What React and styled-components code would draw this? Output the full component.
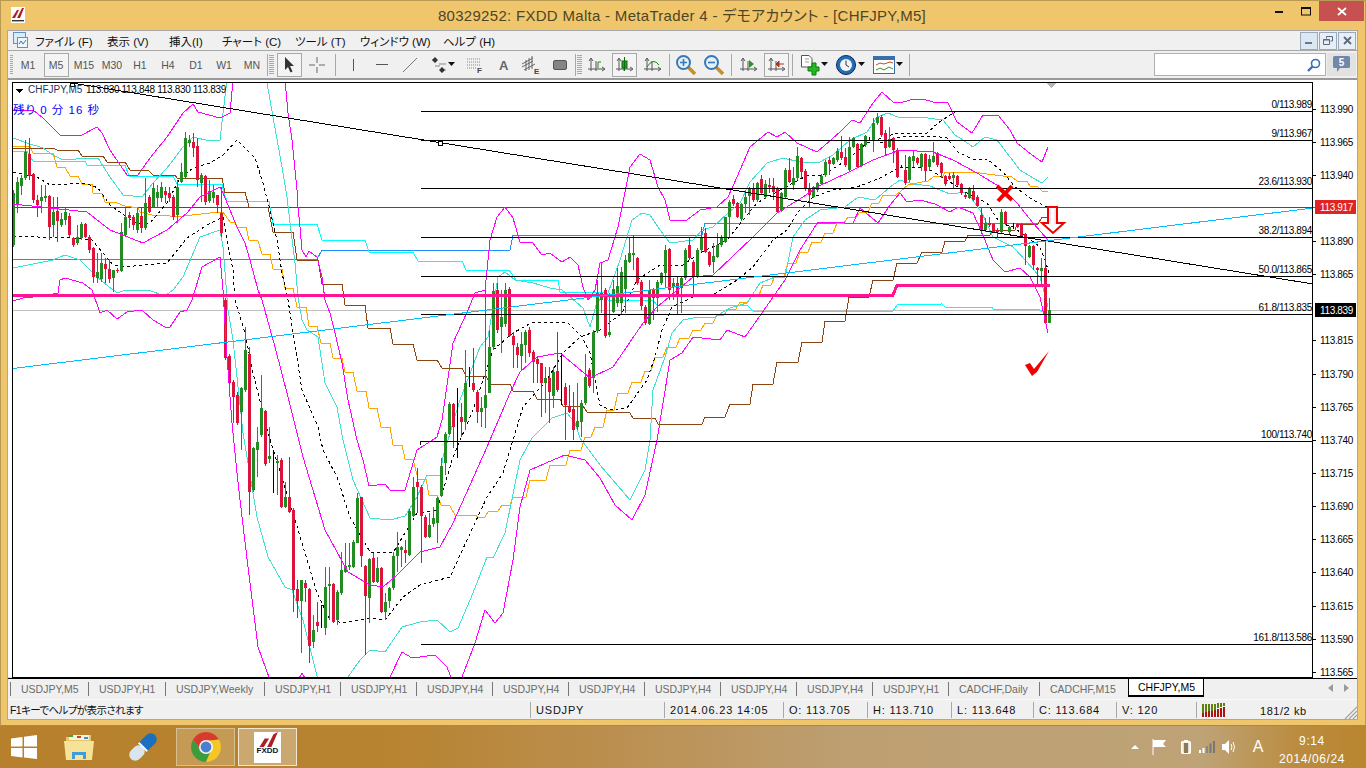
import React from 'react';
import styled, { createGlobalStyle } from 'styled-components';

const FONT = '"Liberation Sans", "Noto Sans CJK JP", sans-serif';

const Global = createGlobalStyle`
  html, body { margin: 0; padding: 0; width: 1366px; height: 768px; overflow: hidden; background: #b8822f; }
  body { font-family: ${FONT}; font-feature-settings: "palt"; }
`;

const Page = styled.div`width:1366px;height:768px;display:flex;flex-direction:column;overflow:hidden;`;
const Win = styled.div`
  height:726px;box-sizing:border-box;background:#efc66b;border:1px solid #b99a55;border-bottom:1px solid #a98a45;
  padding:0 7px 5px 6px;display:flex;flex-direction:column;
`;
const TitleBar = styled.div`height:29px;display:flex;align-items:flex-start;position:relative;flex:none;`;
const AppIcon = styled.div`margin:6px 0 0 4px;width:14px;height:16px;flex:none;`;
const Title = styled.div`
  flex:1;text-align:center;font-size:15px;line-height:30px;color:#4f4526;letter-spacing:.3px;padding-left:74px;white-space:nowrap;
`;
const Caption = styled.div`display:flex;align-items:flex-start;flex:none;margin-right:-6px;`;
const CapBtn = styled.div`width:${p=>p.$w}px;height:20px;display:flex;align-items:center;justify-content:center;background:${p=>p.$bg||'transparent'};`;
const Client = styled.div`flex:1;border:1px solid #a8a8a8;background:#f0f0f0;display:flex;flex-direction:column;min-height:0;`;

const MenuBar = styled.div`height:19px;flex:none;display:flex;align-items:center;border-bottom:1px solid #a8a8a8;font-size:11.5px;color:#111;position:relative;`;
const MenuIcon = styled.div`width:22px;padding-left:5px;height:17px;flex:none;`;
const MenuItem = styled.div`width:${p=>p.$w}px;flex:none;white-space:nowrap;`;
const Mdi = styled.div`margin-left:auto;display:flex;gap:1px;padding-right:1px;`;
const MdiBtn = styled.div`
  width:16px;height:16px;border:1px solid #9aaabb;background:${p=>p.$on?'#dbe7f3':'#e8eef5'};display:flex;align-items:center;justify-content:center;
`;

const ToolBar = styled.div`height:27px;flex:none;display:flex;align-items:center;border-bottom:2px solid #9a9a9a;box-sizing:content-box;padding-left:2px;font-size:10.5px;color:#555;`;
const Grip = styled.div`width:${p=>p.$w||5}px;height:20px;flex:none;margin-right:${p=>p.$mr??3}px;background:repeating-linear-gradient(180deg,#a8a8a8 0 1px,transparent 1px 2px);`;
const Sep = styled.div`width:1px;height:22px;flex:none;background:#a8a8a8;margin:0 ${p=>p.$m??4}px;`;
const Tool = styled.div`
  width:${p=>p.$w||28}px;height:24px;flex:none;box-sizing:border-box;display:flex;align-items:center;justify-content:center;
  ${p=>p.$on?`border:1px solid #a8a8a8;margin:0 1.5px;width:25px;background:repeating-conic-gradient(#fafafa 0 25%,#eee 0 50%) 0 0/2px 2px;`:''}
`;
const Search = styled.div`
  margin-left:auto;width:172px;height:23px;box-sizing:border-box;background:#fff;border:1px solid #b0b0b0;display:flex;align-items:center;justify-content:flex-end;padding-right:4px;flex:none;
`;
const MsgBtn = styled.div`width:29px;height:23px;margin:0 1px 0 1px;background:#e2e2e2;flex:none;display:flex;align-items:center;justify-content:center;`;

const ChartWrap = styled.div`height:598px;flex:none;background:#fff;`;
const ChartSvg = styled.svg`display:block;width:1349px;height:598px;`;

const TabBar = styled.div`height:20px;flex:none;display:flex;align-items:flex-start;border-top:1px solid #000;padding-left:2px;font-size:10.5px;position:relative;`;
const Tab = styled.div`
  width:${p=>p.$w}px;height:${p=>p.$on?'18px':'14px'};box-sizing:border-box;flex:none;white-space:nowrap;
  ${p=>p.$on?`background:#fff;border:1px solid #000;border-top:none;border-bottom:2px solid #000;color:#000;padding:2px 0 0 9px;`
            :`border-left:1px solid #777;color:#6b6b6b;margin-top:3px;padding:0 0 0 10px;line-height:14px;`}
`;
const TabArrows = styled.div`margin-left:auto;padding:5px 8px 0 0;display:flex;gap:11px;`;

const StatusBar = styled.div`flex:1;display:flex;align-items:center;padding-top:1px;border-top:1px solid #fafafa;font-size:11px;color:#111;position:relative;`;
const Cell = styled.div`
  width:${p=>p.$w}px;flex:none;height:16px;line-height:16px;box-sizing:border-box;white-space:nowrap;letter-spacing:.8px;
  ${p=>p.$first?'padding-left:2px;letter-spacing:-.6px;font-size:10.5px;':'border-left:1px solid #a8a8a8;padding-left:5px;'}
`;
const Meter = styled.svg`display:block;margin-top:1px;`;
const Resize = styled.svg`position:absolute;right:0;bottom:0;`;

const TaskBar = styled.div`
  flex:1;display:flex;align-items:center;padding-left:10px;
  background:linear-gradient(90deg,#b6802c 0,#b88330 28%,#bb8f50 45%,#bd9f72 62%,#bea376 88%,#bb8c3f 95%,#b9852f 100%);
`;
const TaskIcon = styled.div`width:${p=>p.$w}px;flex:none;height:38px;display:flex;align-items:center;justify-content:center;`;
const TaskBtn = styled.div`
  width:59px;height:38px;box-sizing:border-box;flex:none;margin-right:3px;display:flex;align-items:center;justify-content:center;
  border:1px solid ${p=>p.$bright?'#f2e6cf':'#d8bf8f'};background:${p=>p.$bright?'#cba870':'#c59a55'};
`;
const FxTile = styled.div`width:27px;height:31px;background:#fff;display:flex;flex-direction:column;align-items:center;overflow:hidden;`;
const FxText = styled.span`font-size:8px;font-weight:bold;line-height:8px;color:#111;`;
const Tray = styled.div`margin-left:auto;display:flex;align-items:center;height:100%;padding-right:11px;`;
const TrayIcon = styled.div`width:${p=>p.$w}px;flex:none;display:flex;align-items:center;justify-content:center;color:#fff;`;
const TrayA = styled.span`font-size:16px;color:#fff;`;
const Clock = styled.div`width:86px;flex:none;text-align:center;color:#fff;font-size:12px;line-height:18px;letter-spacing:.6px;margin-top:5px;`;

/* ---------------------- chart data ---------------------- */
const CFrame = { l: 13, r: 1313, t: 83, b: 678 };

// candles are read from zoomed crops: [top, bottom, colour, high?, low?], y = y0 + v/3
const C8 = [[340,495,'g',330,500],[305,375,'g',290,400],[295,318,'g',285,345],[215,295,'g',180,300],[222,288,'r',175,300],[283,360,'r',280,370],[360,375,'r',345,410],[350,362,'g',315,400],[348,355,'g',315,365],[348,440,'r',345,480],[395,435,'g',350,470],[392,422,'r',350,485],[418,435,'g',400,440],[395,420,'g',385,435],[408,465,'r',400,470],[475,495,'r',470,500],[470,490,'g',435,495],[432,475,'g',425,480],[432,470,'r',430,475],[470,510,'r',465,520],[505,590,'r',500,610],[575,595,'g',520,610],[550,598,'g',520,605],[552,568,'r',535,610],[568,598,'r',540,610],[570,595,'g',570,635],[570,574,'r',565,580],[455,572,'g',430,575],[412,465,'g',385,470],[405,415,'r',395,445],[410,435,'r',405,450],[400,450,'g',385,460],[408,445,'r',385,460],[370,445,'g',295,450],[350,395,'r',345,400],[323,382,'g',310,385],[335,355,'g',315,380],[322,355,'g',305,365],[333,345,'r',320,370],[340,355,'r',320,365],[352,412,'r',345,420],[322,405,'g',300,430],[275,305,'g',250,310],[175,290,'g',155,295],[180,190,'g',165,200],[185,205,'r',160,230],[198,300,'r',175,320],[285,310,'g',280,365],[288,365,'r',285,375],[333,362,'g',300,370],[335,355,'g',315,370],[345,375,'r',345,400],[400,460,'r',320,470]];
const C9 = [[0,175,'r'],[168,248,'r'],[245,290,'r',240,370],[285,370,'r',275,375],[265,335,'g',260,450],[150,270,'g',80,275],[162,575,'r',140,645],[445,570,'g',440,575],[425,450,'g',380,530],[325,405,'g',225,410],[333,493,'r',330,497],[468,477,'g',380,490],[450,580,'k',450,580],[483,490,'g',465,585],[480,620,'r',475,625],[590,620,'g',545,625],[590,635,'r',470,640],[630,870,'r',625,935],[867,903,'r',840,955],[840,903,'g',840,1060],[850,865,'r',840,905],[867,1037,'r',865,1088],[990,1025,'g',945,1045],[965,978,'r',905,995],[915,985,'k',915,985],[862,985,'g',800,1005],[852,858,'g',800,960],[853,965,'r',850,970],[877,960,'g',870,975],[810,880,'g',755,885],[798,815,'g',730,820],[795,802,'g',730,810],[725,800,'g',720,805],[595,728,'g',580,730],[592,768,'r',590,800],[798,888,'r',795,1065],[778,893,'g',775,970],[775,845,'r',760,850],[805,845,'g',770,850],[805,935,'r',800,940],[905,935,'g',880,960],[865,902,'g',860,925],[767,865,'g',755,870],[742,768,'g',695,815],[742,750,'g',738,800],[750,758,'r',720,790],[633,765,'g',628,768],[560,648,'g',530,650],[545,560,'r',505,640],[560,648,'r',555,790],[650,710,'r',645,715],[675,710,'g',640,715],[655,672,'g',620,680],[595,668,'g',590,730],[498,588,'g',475,590],[402,488,'g',395,525],[312,402,'g',305,405],[312,380,'r',310,445],[265,475,'k',265,475],[350,365,'r',310,410],[250,365,'g',150,390],[200,260,'k',200,260],[250,270,'r',145,275],[275,335,'r',270,370]];
const C10 = [[985,995,'g',950,1040],[945,985,'g',610,1045],[800,938,'g',750,940],[632,802,'g',610,810],[630,750,'r',610,760],[712,740,'g',630,820],[630,732,'g',610,740],[628,768,'r',620,770],[768,795,'r',755,865],[800,825,'r',790,865],[793,828,'g',755,870],[757,795,'g',750,850],[750,820,'r',740,830],[815,845,'r',810,910],[838,852,'r',828,910],[850,908,'r',848,1010],[895,910,'g',860,1000],[895,935,'r',860,1030],[875,948,'g',860,985],[872,930,'r',755,935],[820,975,'k',820,975],[922,975,'r',910,1080],[978,997,'r',915,1000],[988,1050,'r',935,1080],[1022,1040,'g',910,1050],[970,1025,'g',960,1070],[890,968,'g',822,975],[870,918,'r',865,925],[757,895,'g',750,940],[640,752,'g',600,760],[640,660,'g',550,700],[630,768,'r',625,775],[755,765,'g',640,770],[628,695,'g',600,700],[618,668,'g',565,680],[575,668,'g',560,705],[540,628,'g',525,700],[520,545,'g',470,550],[518,525,'g',465,570],[533,610,'r',530,615],[607,678,'r',600,690],[680,730,'r',675,735],[630,733,'g',600,735],[630,655,'r',625,720],[605,655,'g',600,695],[580,608,'g',575,615],[510,578,'g',495,620],[508,630,'r',505,660],[608,620,'g',595,660],[610,650,'r',590,705],[595,625,'g',590,700],[510,593,'g',505,600],[495,535,'r',470,540],[545,590,'r',540,650],[510,590,'g',505,595],[470,510,'g',440,515],[458,515,'r',445,520],[517,555,'r',512,560],[527,545,'g',490,580],[495,530,'g',460,535],[470,495,'g',465,500],[412,485,'g',410,490],[365,410,'g',360,470],[358,372,'r',345,378],[370,412,'r',365,415],[372,418,'g',368,422],[352,372,'g',330,400],[328,348,'g',320,405],[325,360,'r',310,365],[310,360,'g',305,365],[298,340,'r',285,345],[312,352,'g',300,358],[315,320,'r',295,340],[318,335,'r',295,360],[328,395,'r',320,398],[338,392,'g',335,395],[270,352,'g',265,355],[270,305,'r',235,310],[295,315,'g',260,330],[228,295,'g',200,300],[235,275,'r',230,295],[272,328,'r',268,332],[325,345,'r',310,380],[322,352,'g',318,355],[310,330,'g',305,335],[288,312,'g',282,316],[245,285,'g',240,290],[240,252,'r',232,285],[235,252,'g',230,255],[212,240,'g',205,245],[215,235,'r',168,240],[232,255,'r',205,260],[200,270,'g',172,275],[175,200,'g',170,205],[192,262,'r',188,265],[192,258,'g',188,262],[168,195,'g',165,200],[170,182,'k',170,182],[130,180,'g',115,215],[110,130,'g',100,135],[110,165,'r',105,170],[160,205,'r',150,225],[178,200,'g',140,205],[175,210,'r',172,250],[210,290,'r',205,295]];
const C7 = [[255,265,'k',255,265],[270,310,'r',225,315],[232,300,'g',228,305],[228,242,'g',212,262],[235,250,'r',230,255],[222,262,'g',218,272],[222,272,'r',218,302],[238,262,'g',225,272],[228,245,'g',185,250],[218,255,'r',215,262],[250,278,'r',246,295],[288,312,'r',284,318],[288,296,'r',278,300],[285,295,'g',275,325],[288,315,'r',285,318],[313,340,'r',310,345],[345,352,'r',340,356],[328,353,'g',322,358],[333,360,'r',315,362],[350,377,'r',346,380],[405,452,'r',385,462],[430,450,'g',415,455],[430,436,'r',410,440],[432,455,'r',428,458],[450,456,'r',445,470],[397,455,'g',388,458],[397,433,'r',393,436],[442,457,'g',438,462],[430,448,'k',430,448],[432,440,'r',430,444],[432,467,'r',430,470],[462,497,'r',458,555],[497,530,'g',494,534],[497,555,'r',494,570],[565,570,'r',562,612],[565,572,'g',535,612],[565,730,'r',485,732],[690,728,'g',655,730]];

const buildCandles = () => {
  const out = [];
  let x = 13;
  const add = (list, y0) => list.forEach(([t,b,c,h,l]) => {
    out.push({ x, t: y0+t/3, b: y0+b/3, h: y0+(h??t-6)/3, l: y0+(l??b+6)/3, c });
    x += 4;
  });
  add(C8, 80);
  add(C9, 300);
  add(C10, 80);
  add(C7, 80);
  return out;
};
const CANDLES = buildCandles();
const CCOL = { g: '#228b22', r: '#dc143c', k: '#000' };

const stair = pts => {
  const o = [];
  pts.forEach((p,i) => {
    if (i) o.push([p[0]-4, pts[i-1][1]]);
    o.push(p);
  });
  return o;
};

const magUp = [[13,110],[27,110],[33,110],[43,118],[60,135],[82,135],[97,127],[102,133],[110,150],[127,175],[138,175],[150,158],[167,137],[183,113],[193,104],[198,112],[220,118],[230,113],[233,80],[285,80],[288,113],[292,140],[297,190],[298,207],[300,227],[302,250],[306,257],[309,251],[317,257],[322,277],[325,300],[330,313],[335,333],[342,363],[348,400],[357,440],[363,460],[369,486],[385,484],[390,490],[405,490],[417,450],[437,437],[442,420],[453,343],[468,310],[475,293],[485,290],[490,240],[497,217],[505,207],[513,218],[520,242],[533,243],[542,255],[550,253],[562,262],[570,257],[578,265],[583,287],[588,300],[595,290],[600,263],[608,260],[618,227],[630,167],[640,154],[650,160],[658,187],[665,200],[670,220],[687,220],[700,210],[717,207],[728,197],[737,177],[750,147],[768,132],[777,137],[785,132],[797,143],[817,152],[840,132],[852,120],[860,123],[873,103],[882,92],[893,102],[900,103],[910,100],[923,99],[933,102],[948,103],[957,122],[972,133],[983,115],[998,115],[1010,130],[1017,143],[1032,155],[1042,162],[1048,147]];
const magMid = [[13,204],[87,212],[110,230],[143,243],[167,230],[187,213],[200,197],[220,187],[223,193],[237,227],[245,243],[250,260],[258,290],[262,300],[275,347],[288,397],[303,457],[325,530],[348,572],[370,585],[383,587],[397,575],[420,552],[440,547],[453,523],[487,447],[510,393],[520,372],[537,357],[560,353],[590,378],[613,367],[643,323],[657,307],[693,277],[713,275],[753,237],[777,213],[803,197],[817,187],[847,173],[873,160],[900,150],[933,152],[953,160],[977,173],[1000,187],[1017,203],[1033,223],[1048,240]];
const magLow = [[13,301],[23,298],[43,296],[58,293],[60,280],[65,278],[83,283],[92,290],[100,313],[107,310],[117,319],[127,312],[142,310],[153,320],[165,327],[170,327],[180,312],[187,310],[192,300],[202,267],[220,257],[223,290],[227,357],[232,423],[237,473],[240,500],[248,567],[258,647],[270,680],[298,680],[302,673],[306,680],[388,680],[390,677],[402,652],[412,658],[435,655],[447,667],[452,680],[460,680],[462,677],[475,643],[485,610],[495,623],[503,613],[513,560],[520,507],[530,470],[553,460],[565,455],[585,460],[600,478],[615,505],[632,520],[645,495],[657,440],[670,360],[682,353],[693,337],[720,340],[727,330],[745,337],[762,313],[773,297],[785,280],[800,250],[818,222],[845,223],[853,223],[860,208],[878,223],[890,205],[900,193],[907,202],[920,200],[935,204],[950,212],[958,207],[973,213],[982,233],[993,260],[1005,272],[1020,268],[1030,277],[1040,297],[1048,333]];
const turqUp = [[13,138],[27,143],[43,148],[53,155],[63,160],[90,158],[98,158],[110,177],[123,195],[142,197],[153,183],[167,168],[183,147],[193,137],[210,141],[220,140],[223,113],[227,80],[264,80],[267,83],[273,117],[282,167],[287,197],[290,223],[295,263],[298,297],[302,320],[307,330],[318,337],[325,383],[337,407],[343,440],[353,480],[370,518],[390,520],[405,516],[417,497],[427,475],[440,475],[443,457],[453,423],[460,400],[480,347],[488,337],[498,277],[505,272],[515,280],[533,283],[550,288],[562,290],[583,308],[590,327],[597,302],[608,293],[620,260],[632,220],[642,213],[650,215],[660,230],[670,243],[693,240],[702,230],[713,227],[728,213],[740,203],[750,182],[767,163],[783,158],[800,162],[818,163],[833,155],[850,140],[867,132],[877,117],[888,113],[900,118],[920,117],[943,120],[955,135],[963,140],[973,147],[985,137],[997,140],[1010,157],[1020,170],[1033,178],[1042,183],[1048,177]];
const turqLow = [[13,268],[53,260],[65,255],[80,260],[97,277],[113,290],[118,293],[125,290],[148,290],[165,296],[173,290],[183,277],[200,237],[220,230],[223,247],[228,310],[233,340],[243,433],[257,517],[268,557],[285,587],[292,590],[303,620],[318,680],[346,680],[348,677],[360,660],[370,650],[385,652],[402,627],[420,622],[437,620],[450,632],[458,628],[473,593],[487,557],[493,558],[505,533],[520,460],[532,438],[552,418],[567,413],[575,423],[580,438],[600,465],[630,500],[645,470],[650,440],[653,390],[665,357],[672,333],[683,320],[698,317],[713,318],[730,308],[747,303],[760,283],[775,277],[785,277],[793,237],[805,220],[820,210],[845,207],[858,197],[875,200],[890,187],[900,180],[913,184],[930,186],[950,194],[967,192],[982,213],[993,237],[1013,247],[1027,262],[1040,277],[1048,307]];
const dash1 = [[13,172],[37,177],[50,185],[85,183],[98,188],[110,205],[127,217],[137,223],[150,223],[167,203],[180,178],[193,168],[210,163],[223,155],[237,140],[247,150],[255,158],[263,183],[270,210],[277,240],[282,273],[288,300],[302,390],[318,427],[323,450],[337,477],[350,517],[370,552],[393,553],[417,513],[437,510],[441,497],[453,457],[473,410],[493,350],[513,333],[533,322],[567,322],[582,337],[590,353],[600,405],[610,410],[627,408],[647,380],[655,357],[662,330],[672,307],[693,297],[713,295],[737,280],[753,267],[773,240],[787,230],[797,213],[813,197],[833,190],[857,187],[880,178],[900,167],[927,168],[947,180],[967,193],[987,203],[1000,223],[1013,227],[1027,237],[1040,247],[1045,260],[1049,273]];
const dash2 = [[13,236],[38,237],[60,237],[92,240],[113,265],[123,267],[167,263],[187,238],[207,225],[223,217],[227,240],[233,270],[235,300],[245,333],[253,373],[268,433],[293,513],[317,593],[330,620],[343,623],[370,618],[385,620],[403,597],[420,585],[450,577],[467,540],[487,497],[503,473],[513,440],[523,407],[547,380],[563,353],[580,337],[600,330],[622,313],[637,280],[660,265],[683,265],[700,253],[727,240],[743,220],[757,203],[780,190],[808,175],[823,175],[847,160],[867,143],[897,133],[927,133],[938,123],[953,113],[959,110]];
const dash3 = [[880,143],[900,137],[933,136],[947,138],[958,152],[972,159],[987,159],[1003,172],[1015,187],[1033,200],[1047,207]];
const orange = [[13,146],[30,146],[33,153],[53,153],[57,167],[65,167],[70,176],[78,176],[82,184],[92,184],[93,193],[102,194],[105,202],[117,203],[125,206],[138,208],[140,212],[152,215],[165,215],[175,217],[210,213],[223,212],[230,222],[235,222],[237,227],[246,227],[249,240],[258,241],[262,254],[270,254],[273,269],[282,269],[285,288],[293,288],[297,307],[306,307],[309,326],[317,326],[321,343],[330,343],[333,358],[342,358],[345,372],[353,372],[357,391],[366,391],[369,408],[377,408],[381,427],[390,427],[393,445],[402,445],[405,459],[413,459],[418,479],[426,479],[429,495],[437,495],[441,505],[450,506],[455,515],[475,515],[478,517],[485,517],[488,512],[498,511],[502,505],[510,505],[513,497],
  ...stair([[513,497],[530,480],[550,465],[570,450],[585,437],[595,427],[607,410],[618,393],[632,382],[645,371],[655,357],[667,347],[680,338],[693,330],[705,323],[717,315],[728,309],[740,302],[752,295],[763,285],[775,276],[788,263],[800,252],[812,242],[825,233],[837,223],[848,217],[860,212],[872,203],[883,195],[900,192]]).slice(1),
  [908,185],[922,182],[928,181],[933,177],[943,176],[945,172],[972,172],[987,174],[1003,176],[1012,177],[1017,181],[1027,181],[1030,186],[1037,186],[1042,191],[1048,192]];
const cyan = [[13,151],[27,151],[33,161],[85,161],[87,165],[125,165],[129,176],[173,176],[177,184],[222,184],[224,193],[227,201],[269,201],[273,224],[317,224],[322,240],[365,240],[369,252],[413,252],[418,261],[462,261],[466,270],[509,270],[516,280],[558,280],[560,292],[605,292],[608,300],[653,300],[657,305],[747,305],[753,311],[893,311],[897,305],[942,304],[945,307],[992,307],[993,309],[1038,309],[1045,313]];
const brown = [[13,148],[53,148],[57,150],[78,150],[82,156],[103,156],[107,162],[125,162],[130,170],[148,170],[153,175],[175,175],[177,178],[222,178],[225,193],[245,192],[249,207],[268,207],[273,232],[293,232],[297,260],[318,260],[322,284],[342,284],[345,305],[365,305],[368,328],[390,328],[393,344],[413,344],[417,360],[437,360],[442,368],[462,368],[466,376],[486,376],[490,384],[510,384],[513,391],[533,391],[537,399],[560,399],[563,406],[583,406],[587,412],[630,413],[633,418],[655,418],[658,424],[702,424],[705,417],[725,417],[730,404],[750,404],[753,384],[773,384],[777,362],[798,362],[802,342],[822,342],[825,321],[845,321],[849,297],[869,297],[873,280],[893,280],[897,263],[917,263],[922,252],[942,252],[945,241],[965,241],[968,235],[990,235],[993,230],[1015,230],[1017,224],[1038,224],[1042,217],[1048,217]];
const blue = [[13,259],[317,259],[322,250],[510,250],[513,235],[702,235],[705,223],[1038,223]];
const pink = [[13,295],[893,295],[897,285],[1050,285]];

const pts = a => a.map(p => p.join(',')).join(' ');

const FIBS = [
  [111,'0/113.989'],[140,'9/113.967'],[188,'23.6/113.930'],[237,'38.2/113.894'],[276,'50.0/113.865'],[314,'61.8/113.835'],[441,'100/113.740'],[644,'161.8/113.586'],
];
const AXIS = [['113.990',110],['113.965',143],['113.940',176],['113.890',242],['113.865',275],['113.815',341],['113.790',375],['113.765',408],['113.740',441],['113.715',474],['113.690',507],['113.665',540],['113.640',573],['113.615',607],['113.590',640],['113.565',673]];

const ChartText = styled.text`font-family:${FONT};font-size:${p=>p.$s||10}px;letter-spacing:${p=>p.$ls??-.35}px;fill:${p=>p.$c||'#000'};`;

const Chart = () => (
  <ChartSvg viewBox="8 80 1349 598" shapeRendering="crispEdges">
    <defs>
      <clipPath id="plot"><rect x={CFrame.l} y={CFrame.t} width={CFrame.r-CFrame.l} height={CFrame.b-CFrame.t} /></clipPath>
    </defs>
    <g clipPath="url(#plot)" fill="none">
      <line x1="13" x2="1313" y1="310.5" y2="310.5" stroke="#c0c0c0" />
      <line x1="13" x2="1313" y1="207.5" y2="207.5" stroke="#ff0000" />
      <polyline points={pts(blue)} stroke="#1e90ff" />
      <polyline points={pts(cyan)} stroke="#00ffff" />
      <polyline points={pts(orange)} stroke="#ffa500" />
      <polyline points={pts(brown)} stroke="#8b4513" />
      <polyline points={pts(turqUp)} stroke="#40e0d0" />
      <polyline points={pts(turqLow)} stroke="#40e0d0" />
      <polyline points={pts(dash1)} stroke="#000" strokeDasharray="3 3" />
      <polyline points={pts(dash2)} stroke="#000" strokeDasharray="3 3" />
      <polyline points={pts(dash3)} stroke="#000" strokeDasharray="3 3" />
      {CANDLES.map(k => (
        <g key={k.x}>
          <line x1={k.x+.5} x2={k.x+.5} y1={k.h} y2={k.l} stroke={CCOL[k.c]} />
          {k.c !== 'k' && <rect x={k.x-1} y={k.t} width="3" height={Math.max(1,k.b-k.t)} fill={CCOL[k.c]} />}
        </g>
      ))}
      <polyline points={pts(magUp)} stroke="#ff00ff" />
      <polyline points={pts(magMid)} stroke="#ff00ff" />
      <polyline points={pts(magLow)} stroke="#ff00ff" />
      <polyline points={pts(pink)} stroke="#ff1493" strokeWidth="3" />
      {FIBS.map(([y]) => <line key={y} x1="421" x2="1313" y1={y+.5} y2={y+.5} stroke="#000" />)}
      <line x1="72" y1="83" x2="1313" y2="284" stroke="#000" />
      <line x1="13" y1="368.5" x2="1313" y2="208" stroke="#00bfff" />
      <polyline points="420,445 420,441 424,441" stroke="#000" />
      <rect x="438.5" y="141.5" width="4" height="4" fill="#fff" stroke="#000" />
      <rect x="70.5" y="83.5" width="4" height="3" fill="#fff" stroke="#000" />
      <polygon points="1047,83 1056,83 1051.5,88" fill="#b4b4b4" />
      <g shapeRendering="auto">
        <path d="M997 186 L1012 200 M1012 186 L998 201" stroke="#f00000" strokeWidth="4" />
        <polygon points="1048,207 1057,207 1057,223 1064,223 1053,233 1042,223 1048,223" fill="#fff" stroke="#f00000" strokeWidth="2" />
        <path d="M1050 209 V224 M1055 209 V224" stroke="#ffc8d8" strokeWidth="1" />
        <polygon points="1025,365 1030,363 1034,369 1049,351 1037,372 1032,376" fill="#f00000" />
      </g>
    </g>
    <polygon points="16,89 23,89 19.5,93" fill="#000" />
    <ChartText x="28" y="93" $s="10" $c="#1c3560" $ls="0">CHFJPY,M5</ChartText>
    <ChartText x="86" y="93" $s="10" $ls="-.32">113.830 113.848 113.830 113.839</ChartText>
    <ChartText x="13" y="114" $s="11.5" $c="#0000ff" $ls="1" xmlSpace="preserve">残り 0 分 16 秒</ChartText>
    {FIBS.map(([y,t]) => (
      <ChartText key={t} x="1312" y={y-3} textAnchor="end">{t}</ChartText>
    ))}
    <rect x="12.5" y="82.5" width="1300" height="595" fill="none" stroke="#000" />
    <line x1="8" x2="12" y1="677.5" y2="677.5" stroke="#d8d8d8" />
    {AXIS.map(([t,y]) => (
      <g key={t}>
        <line x1="1313" x2="1316" y1={y-.5} y2={y-.5} stroke="#000" />
        <ChartText x="1320" y={y+3}>{t}</ChartText>
      </g>
    ))}
    <rect x="1315" y="200" width="41" height="14" fill="#e02424" />
    <line x1="1313" x2="1316" y1="207.5" y2="207.5" stroke="#e02424" />
    <ChartText x="1320" y="210.5" $c="#fff">113.917</ChartText>
    <rect x="1315" y="303" width="41" height="14" fill="#000" />
    <ChartText x="1320" y="313.5" $c="#fff">113.839</ChartText>
  </ChartSvg>
);

/* ---------------------- icons ---------------------- */
const Ic = ({w=22,h=18,children}) => <svg width={w} height={h} viewBox={`0 0 ${w} ${h}`} style={{display:'block'}}>{children}</svg>;
const Axes = () => <path d="M6 3 V15 M3 13 H19 M4 5 L6 2 L8 5 M17 11 L20 13 L17 15 M11 5 V15" stroke="#555" strokeWidth="1" fill="none" />;
const Drop = () => <svg width="8" height="5" viewBox="0 0 8 5" style={{marginLeft:1}}><path d="M0 0H7L3.5 4Z" fill="#111"/></svg>;

const Logo = ({s=14}) => (
  <svg width={s} height={s*0.7} viewBox="0 0 20 14"><path d="M2 14 L7 6 H11 L6 14Z M9 14 L15 2 L19 0 L13 14Z" fill="#b01f26" /></svg>
);

const Tools1 = ['M1','M15','M30','H1','H4','D1','W1','MN'];

const Zoomer = ({minus}) => (
  <Ic w={24} h={22}>
    <path d="M14 13 L21 20" stroke="#c89020" strokeWidth="3.5" />
    <circle cx="9.5" cy="8.5" r="6.5" fill="#e2f0fa" stroke="#3a78b5" strokeWidth="2"/>
    <path d={minus?'M6 8.5H13':'M6 8.5H13M9.5 5V12'} stroke="#3a78b5" strokeWidth="1.6" />
  </Ic>
);

const Chrome = () => (
  <svg width="30" height="30" viewBox="-15 -15 30 30">
    <path d="M0 -6 L12.99 -7.5 A15 15 0 0 0 -12.99 -7.5 L-5.2 3 Z" fill="#d83a2e"/>
    <path d="M-12.99 -7.5 A15 15 0 0 0 0 15 L5.2 3 L-5.2 3 Z" fill="#3e9c3c"/>
    <path d="M12.99 -7.5 A15 15 0 0 1 0 15 L5.2 3 L0 -6 Z" fill="#f4c726"/>
    <circle r="7" fill="#f4f4f4"/><circle r="5.4" fill="#4a7fd0"/>
  </svg>
);

export default function App() {
  return (
    <Page>
      <Global />
      <Win>
        <TitleBar>
          <AppIcon>
            <svg width="14" height="16" viewBox="0 0 14 16"><rect width="14" height="16" fill="#fff"/><path d="M1 11 L6 3 H8 L4 11Z M6 11 L11 1 H13 L9 11Z" fill="#b01f26"/><rect x="1" y="13" width="12" height="1.4" fill="#333"/></svg>
          </AppIcon>
          <Title>80329252: FXDD Malta - MetaTrader 4 - デモアカウント - [CHFJPY,M5]</Title>
          <Caption>
            <CapBtn $w={28}><svg width="8" height="3"><rect width="8" height="2" y="1" fill="#111"/></svg></CapBtn>
            <CapBtn $w={26}><svg width="11" height="9"><rect x=".5" y="1" width="9" height="7" fill="none" stroke="#111"/><rect width="10" height="2" y="0" fill="#111"/></svg></CapBtn>
            <CapBtn $w={45} $bg="#c75050"><svg width="10" height="9"><path d="M1 1L9 8M9 1L1 8" stroke="#fff" strokeWidth="1.8"/></svg></CapBtn>
          </Caption>
        </TitleBar>
        <Client>
          <MenuBar>
            <MenuIcon>
              <svg width="16" height="17" viewBox="0 0 16 17"><rect x=".5" y=".5" width="12" height="11" fill="#dcebf8" stroke="#5c94c8"/><rect x="4.5" y="5.5" width="10" height="10" fill="#eef6fc" stroke="#5c94c8"/><path d="M6 12 L8 9 L10 12 L13 8" stroke="#3a78b5" fill="none"/></svg>
            </MenuIcon>
            <MenuItem $w={72}>ファイル (F)</MenuItem>
            <MenuItem $w={62}>表示 (V)</MenuItem>
            <MenuItem $w={53}>挿入(I)</MenuItem>
            <MenuItem $w={73}>チャート (C)</MenuItem>
            <MenuItem $w={65}>ツール (T)</MenuItem>
            <MenuItem $w={83}>ウィンドウ (W)</MenuItem>
            <MenuItem $w={60}>ヘルプ (H)</MenuItem>
            <Mdi>
              <MdiBtn $on><svg width="8" height="8"><rect y="5" width="7" height="2" fill="#6a7a8a"/></svg></MdiBtn>
              <MdiBtn><svg width="10" height="9"><path d="M3.5 2.5V.5H9.5V5H7.5M.5 3.5H6.5V8.5H.5Z M.5 4H6.5" stroke="#5a6a7a" fill="none"/></svg></MdiBtn>
              <MdiBtn><svg width="9" height="9"><path d="M1 1L8 8M8 1L1 8" stroke="#5a6a7a" strokeWidth="1.8"/></svg></MdiBtn>
            </Mdi>
          </MenuBar>
          <ToolBar>
            <Grip $w={3} $mr={1} />
            <Tool>M1</Tool>
            <Tool $on>M5</Tool>
            {Tools1.slice(1).map(t => <Tool key={t}>{t}</Tool>)}
            <Sep $m={1} />
            <Grip $mr={1} />
            <Tool $on>
              <Ic w={14} h={18}><path d="M3 1 V14 L6 11 L8.5 16.5 L10.5 15.5 L8 10 H12 Z" fill="#333"/></Ic>
            </Tool>
            <Tool><Ic w={18} h={18}><path d="M9 1V7M9 11V17M1 9H7M11 9H17" stroke="#666"/></Ic></Tool>
            <Sep $m={4} />
            <Tool><Ic w={4} h={18}><path d="M1.5 3V15" stroke="#555"/></Ic></Tool>
            <Tool><Ic w={14} h={4}><path d="M1 1.5H13" stroke="#555"/></Ic></Tool>
            <Tool><Ic w={16} h={16}><path d="M1 15L15 1" stroke="#777"/></Ic></Tool>
            <Tool $w={38}>
              <Ic w={16} h={16}><path d="M1 3H6M8 7H15M4 9H9M11 13H15" stroke="#888"/><path d="M4 0L7 3L4 6L1 3ZM11 10L14 13L11 16L8 13Z" fill="#333"/></Ic><Drop/>
            </Tool>
            <Tool><Ic w={18} h={20}><path d="M0 4H14M0 7H14M0 10H14M0 13H9" stroke="#888" strokeDasharray="1 1"/><text x="10" y="18" fontSize="8" fontWeight="bold" fill="#444" fontFamily="Liberation Sans">F</text></Ic></Tool>
            <Tool><Ic w={14} h={20}><text x="2" y="15" fontSize="13" fontWeight="bold" fill="#666" fontFamily="Liberation Sans">A</text></Ic></Tool>
            <Tool><Ic w={22} h={22}><path d="M1 10L12 4M1 13L12 7M3 16L14 10M5 6L5 17M8 4L8 16M11 2V15" stroke="#666"/><text x="13" y="20" fontSize="8" fontWeight="bold" fill="#444" fontFamily="Liberation Sans">E</text></Ic></Tool>
            <Tool><Ic w={14} h={10}><rect x=".5" y=".5" width="13" height="9" rx="1.5" fill="#858585" stroke="#555"/></Ic></Tool>
            <Sep $m={1} />
            <Grip $mr={0} />
            <Tool><Ic><Axes/><path d="M13 12V6H16" stroke="#1d8a1d" fill="none"/></Ic></Tool>
            <Tool $on><Ic><Axes/><rect x="9" y="5" width="5" height="7" fill="#22a022" stroke="#0d6a0d"/><path d="M11.5 1V15" stroke="#0d6a0d"/></Ic></Tool>
            <Tool><Ic><Axes/><path d="M6 11 Q12 1 18 9" stroke="#1d8a1d" fill="none"/></Ic></Tool>
            <Sep $m={2.5} />
            <Tool><Zoomer /></Tool>
            <Tool><Zoomer minus /></Tool>
            <Sep $m={2.5} />
            <Tool><Ic><Axes/><path d="M12 4L17 8L12 12Z" fill="#1d9a1d"/></Ic></Tool>
            <Tool $on><Ic><Axes/><path d="M11 8H19M14 5L11 8L14 11Z" stroke="#b03020" fill="#b03020"/></Ic></Tool>
            <Sep $m={1.5} />
            <Tool $w={38}>
              <Ic w={22} h={22}><path d="M3.5 1.5H11L14 4.5V13H3.5Z" fill="#fff" stroke="#555"/><path d="M7 5H11M7 8H11" stroke="#999"/><path d="M10 13H14V9H18V13H21V17H18V21H14V17H10Z" fill="#22bb22" stroke="#0d7a0d"/></Ic><Drop/>
            </Tool>
            <Tool $w={37}>
              <Ic w={22} h={22}><circle cx="11" cy="11" r="9.5" fill="#1f70b8" stroke="#125"/><circle cx="11" cy="11" r="6" fill="#f4f4f4"/><path d="M11 6.5V11L14 13" stroke="#333" fill="none"/></Ic><Drop/>
            </Tool>
            <Tool $w={38}>
              <Ic w={22} h={18}><rect x=".5" y=".5" width="21" height="17" fill="#fff" stroke="#3a6ea8"/><rect x="1" y="1" width="20" height="3" fill="#3a6ea8"/><path d="M3 9L7 7L11 8L17 6L20 7" stroke="#c05020" fill="none"/><path d="M3 14L7 12L11 14L16 11L20 13" stroke="#2a9a2a" fill="none"/></Ic><Drop/>
            </Tool>
            <Sep $m={2} />
            <Search>
              <svg width="14" height="14" viewBox="0 0 14 14"><circle cx="8.5" cy="5.5" r="4" fill="none" stroke="#3b6cc0" strokeWidth="1.6"/><path d="M5.5 8.5L1 13" stroke="#3b6cc0" strokeWidth="2.4"/></svg>
            </Search>
            <MsgBtn>
              <svg width="17" height="17" viewBox="0 0 17 17"><path d="M0 1.5Q0 0 1.5 0H15.5Q17 0 17 1.5V10.5Q17 12 15.5 12H7L4 16V12H1.5Q0 12 0 10.5Z" fill="#7088ab"/><text x="8.5" y="10" fontSize="10" textAnchor="middle" fontWeight="bold" fill="#fff" fontFamily="Liberation Sans">5</text></svg>
            </MsgBtn>
          </ToolBar>
          <ChartWrap><Chart /></ChartWrap>
          <TabBar>
            <Tab $w={78}>USDJPY,M5</Tab>
            <Tab $w={77}>USDJPY,H1</Tab>
            <Tab $w={99}>USDJPY,Weekly</Tab>
            <Tab $w={76}>USDJPY,H1</Tab>
            <Tab $w={76}>USDJPY,H1</Tab>
            <Tab $w={76}>USDJPY,H4</Tab>
            <Tab $w={76}>USDJPY,H4</Tab>
            <Tab $w={76}>USDJPY,H4</Tab>
            <Tab $w={76}>USDJPY,H4</Tab>
            <Tab $w={76}>USDJPY,H4</Tab>
            <Tab $w={76}>USDJPY,H4</Tab>
            <Tab $w={76}>USDJPY,H1</Tab>
            <Tab $w={91}>CADCHF,Daily</Tab>
            <Tab $w={89}>CADCHF,M15</Tab>
            <Tab $w={76} $on>CHFJPY,M5</Tab>
            <TabArrows>
              <svg width="5" height="8"><path d="M5 0V8L0 4Z" fill="#9a9a9a"/></svg>
              <svg width="5" height="8"><path d="M0 0V8L5 4Z" fill="#9a9a9a"/></svg>
            </TabArrows>
          </TabBar>
          <StatusBar>
            <Cell $first $w={522}>F1キーでヘルプが表示されます</Cell>
            <Cell $w={134}>USDJPY</Cell>
            <Cell $w={119}>2014.06.23 14:05</Cell>
            <Cell $w={84}>O: 113.705</Cell>
            <Cell $w={84}>H: 113.710</Cell>
            <Cell $w={82}>L: 113.648</Cell>
            <Cell $w={83}>C: 113.684</Cell>
            <Cell $w={80}>V: 120</Cell>
            <Cell $w={140}>
              <Meter width="120" height="14" viewBox="0 0 120 14">
                <g fill="#5f7f10">{[0,1,2,3,4,5,6,7].map(i => <rect key={i} x={i*3} y={i>4?0:1} width="2" height={[9,8,7,7,6,5,4,3][i]} />)}</g>
                <g fill="#a81810">{[0,1,2,3,4,5,6,7].map(i => <rect key={i} x={i*3} y={[9,8,7,7,6,5,4,3][i]+1} width="2" height={13-[9,8,7,7,6,5,4,3][i]} />)}</g>
                <text x="58" y="12" fontSize="11" letterSpacing=".55" fill="#111" fontFamily="Liberation Sans">181/2 kb</text>
              </Meter>
            </Cell>
            <Resize width="13" height="13" viewBox="0 0 13 13"><path d="M1 13L13 1M5 13L13 5M9 13L13 9" stroke="#a0a0a0" strokeWidth="1.2"/></Resize>
          </StatusBar>
        </Client>
      </Win>
      <TaskBar>
        <TaskIcon $w={28}>
          <svg width="28" height="26" viewBox="0 0 28 26"><path d="M1 4.5L12.5 3V12.5H1ZM14 2.8L27 1V12.5H14ZM1 14H12.5V23.5L1 22ZM14 14H27V25L14 23.5Z" fill="#fff"/></svg>
        </TaskIcon>
        <TaskIcon $w={82}>
          <svg width="32" height="30" viewBox="0 0 32 30"><path d="M3 5H12L14 3H28V26H3Z" fill="#e9c56a"/><path d="M6 3H26V8H6Z" fill="#f7f3df"/><path d="M1 9H31L29 28H3Z" fill="#f6e39a"/><path d="M9 27V20H23V27H20V23H12V27Z" fill="#3e9cd8"/><rect x="6" y="3" width="4" height="2" fill="#3aa63a"/><rect x="14" y="4" width="4" height="2" fill="#d04030"/><rect x="21" y="5" width="4" height="2" fill="#3a90d0"/></svg>
        </TaskIcon>
        <TaskIcon $w={46}>
          <svg width="32" height="30" viewBox="0 0 32 30"><g transform="rotate(-45 16 15)"><rect x="-1" y="9" width="17" height="12" rx="6" fill="#d8e4ee"/><path d="M16 9H27A6 6 0 0 1 27 21H16Z" fill="#1a6fc0"/><rect x="15" y="9" width="2" height="12" fill="#f4f8fb"/></g></svg>
        </TaskIcon>
        <TaskIcon $w={10} />
        <TaskBtn><Chrome /></TaskBtn>
        <TaskBtn $bright>
          <FxTile>
            <Logo s={22} />
            <FxText>FXDD</FxText>
          </FxTile>
        </TaskBtn>
        <Tray>
          <TrayIcon $w={24}><svg width="8" height="4"><path d="M0 4L4 0L8 4Z" fill="#fff"/></svg></TrayIcon>
          <TrayIcon $w={24}><svg width="16" height="16" viewBox="0 0 16 16"><path d="M2 0V16" stroke="#fff"/><path d="M2 1H15L12 5L15 8H2Z" fill="#fff"/></svg></TrayIcon>
          <TrayIcon $w={30}><svg width="10" height="14" viewBox="0 0 10 14"><rect x=".7" y="1.7" width="8.6" height="11.6" rx="1" fill="#e8dfc8" stroke="#fff" strokeWidth="1.4"/><rect x="3" y="3" width="4" height="10" fill="#8a7a5a"/><rect x="3" y="0" width="4" height="2" fill="#fff"/></svg></TrayIcon>
          <TrayIcon $w={12}><svg width="16" height="12" viewBox="0 0 16 12" style={{flex:'none'}}><rect y="9" width="2" height="3" fill="#fff"/><rect x="3.5" y="7" width="2" height="5" fill="#fff"/><rect x="7" y="5" width="2" height="7" fill="#888"/><rect x="10.5" y="2.5" width="2" height="9.5" fill="#777"/><rect x="14" y="0" width="2" height="12" fill="#777"/></svg></TrayIcon>
          <TrayIcon $w={34}><svg width="16" height="14" viewBox="0 0 16 14"><path d="M0 4H3L7 0V14L3 10H0Z" fill="#fff"/><path d="M9 4Q11 7 9 10M11 2Q14 7 11 12" stroke="#fff" fill="none"/></svg></TrayIcon>
          <TrayIcon $w={22}><TrayA>A</TrayA></TrayIcon>
          <Clock>9:14<br/>2014/06/24</Clock>
        </Tray>
      </TaskBar>
    </Page>
  );
}
